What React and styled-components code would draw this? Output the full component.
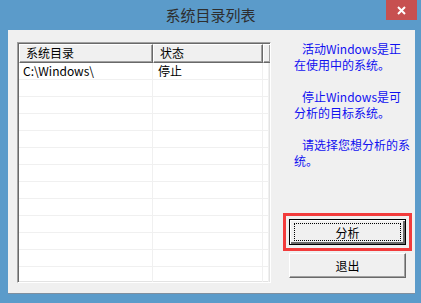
import React from 'react';
import styled, { createGlobalStyle } from 'styled-components';

const GlobalStyle = createGlobalStyle`
  html, body {
    margin: 0;
    padding: 0;
    background: #5b9bca;
  }
  body {
    font-family: "Noto Sans CJK SC", "Noto Sans", sans-serif;
    font-size: 12px;
  }
`;

const Window = styled.div`
  width: 421px;
  height: 303px;
  box-sizing: border-box;
  padding-bottom: 9px;
  background: #5b9bca;
  display: flex;
  flex-direction: column;
`;

const TitleBar = styled.div`
  height: 30px;
  flex: none;
  display: grid;
  grid-template-columns: 1fr auto 1fr;
`;

const Title = styled.div`
  grid-column: 2;
  font-size: 15px;
  line-height: 29px;
  color: #2e2e2e;
`;

const CloseButton = styled.div`
  grid-column: 3;
  justify-self: end;
  align-self: start;
  width: 31px;
  height: 20px;
  margin-right: 4px;
  background: #c75050;
  display: flex;
  align-items: center;
  justify-content: center;
`;

const Panel = styled.div`
  flex: 1;
  margin: 0 6px 0 8px;
  background: #f0f0f0;
  border-bottom: 1px solid #7f8f9f;
  display: flex;
  padding: 11px 0 0 9px;
  min-height: 0;
`;

const ListView = styled.div`
  width: 254px;
  height: 241px;
  margin-top: 1px;
  box-sizing: border-box;
  background: #fff;
  border: 1px solid;
  border-color: #a0a0a0 #fff #fff #a0a0a0;
  box-shadow: inset 1px 1px 0 #696969, inset -1px -1px 0 #e3e3e3;
  padding: 1px;
  overflow: hidden;
  display: flex;
  flex-direction: column;
`;

const Row = styled.div`
  display: grid;
  grid-template-columns: 134px 110px 1fr;
  flex: none;
`;

const HeaderCell = styled.div`
  height: 19px;
  box-sizing: border-box;
  background: #f0f0f0;
  border: 1px solid;
  border-color: #fff #696969 #696969 #fff;
  box-shadow: inset -1px -1px 0 #a0a0a0;
  padding-left: 6px;
  line-height: 16px;
  color: #000;
  white-space: nowrap;
`;

const Cell = styled.div`
  height: 17px;
  box-sizing: border-box;
  border-bottom: 1px solid #f0f0f0;
  border-right: 1px solid #f0f0f0;
  padding-left: ${(p) => (p.first ? '4px' : '5px')};
  line-height: 16px;
  color: #000;
  white-space: nowrap;
`;

const Side = styled.div`
  margin-left: 12px;
  width: 129px;
  display: flex;
  flex-direction: column;
`;

const Notes = styled.div`
  padding-left: 11px;
  color: #1010f0;
  line-height: 16px;
`;

const Note = styled.p`
  margin: 0 0 16px;
`;

const NoteLine = styled.span`
  display: block;
  padding-left: ${(p) => (p.indent ? '8px' : '0')};
  white-space: nowrap;
`;

const Highlight = styled.div`
  margin-top: auto;
  border: 3px solid #f23b3b;
  padding: 3px;
`;

const Button = styled.div`
  position: relative;
  height: ${(p) => (p.primary ? '26px' : '25px')};
  box-sizing: border-box;
  display: flex;
  align-items: center;
  justify-content: center;
  color: #000;
  background: #f0f0f0;
  border: 1px solid;
  border-color: ${(p) =>
    p.primary ? '#000' : '#fff #696969 #696969 #fff'};
  box-shadow: ${(p) =>
    p.primary
      ? 'inset 1px 1px 0 #fff, inset -2px -2px 0 #696969'
      : 'inset -1px -1px 0 #a0a0a0'};

  ${(p) =>
    p.focused &&
    `
    &::after {
      content: '';
      position: absolute;
      inset: 3px 4px 3px 4px;
      border: 1px dotted #000;
    }
  `}
`;

const ExitButton = styled(Button)`
  margin: 2px 6px 15px 6px;
`;

const notes = [
  ['活动Windows是正', '在使用中的系统。'],
  ['停止Windows是可', '分析的目标系统。'],
  ['请选择您想分析的系', '统。'],
];

const rows = [
  { dir: 'C:\\Windows\\', state: '停止' },
  ...Array.from({ length: 12 }, () => ({ dir: '', state: '' })),
];

export default function App() {
  return (
    <>
      <GlobalStyle />
      <Window>
        <TitleBar>
          <Title>系统目录列表</Title>
          <CloseButton>
            <svg width="9" height="9" viewBox="0 0 9 9">
              <path d="M1 1L8 8M8 1L1 8" stroke="#fff" strokeWidth="2" />
            </svg>
          </CloseButton>
        </TitleBar>
        <Panel>
          <ListView>
            <Row>
              <HeaderCell>系统目录</HeaderCell>
              <HeaderCell>状态</HeaderCell>
              <HeaderCell />
            </Row>
            {rows.map((r, i) => (
              <Row key={i}>
                <Cell first>{r.dir}</Cell>
                <Cell>{r.state}</Cell>
                <Cell />
              </Row>
            ))}
          </ListView>
          <Side>
            <Notes>
              {notes.map(([first, second]) => (
                <Note key={first}>
                  <NoteLine indent>{first}</NoteLine>
                  <NoteLine>{second}</NoteLine>
                </Note>
              ))}
            </Notes>
            <Highlight>
              <Button primary focused>
                分析
              </Button>
            </Highlight>
            <ExitButton>退出</ExitButton>
          </Side>
        </Panel>
      </Window>
    </>
  );
}
